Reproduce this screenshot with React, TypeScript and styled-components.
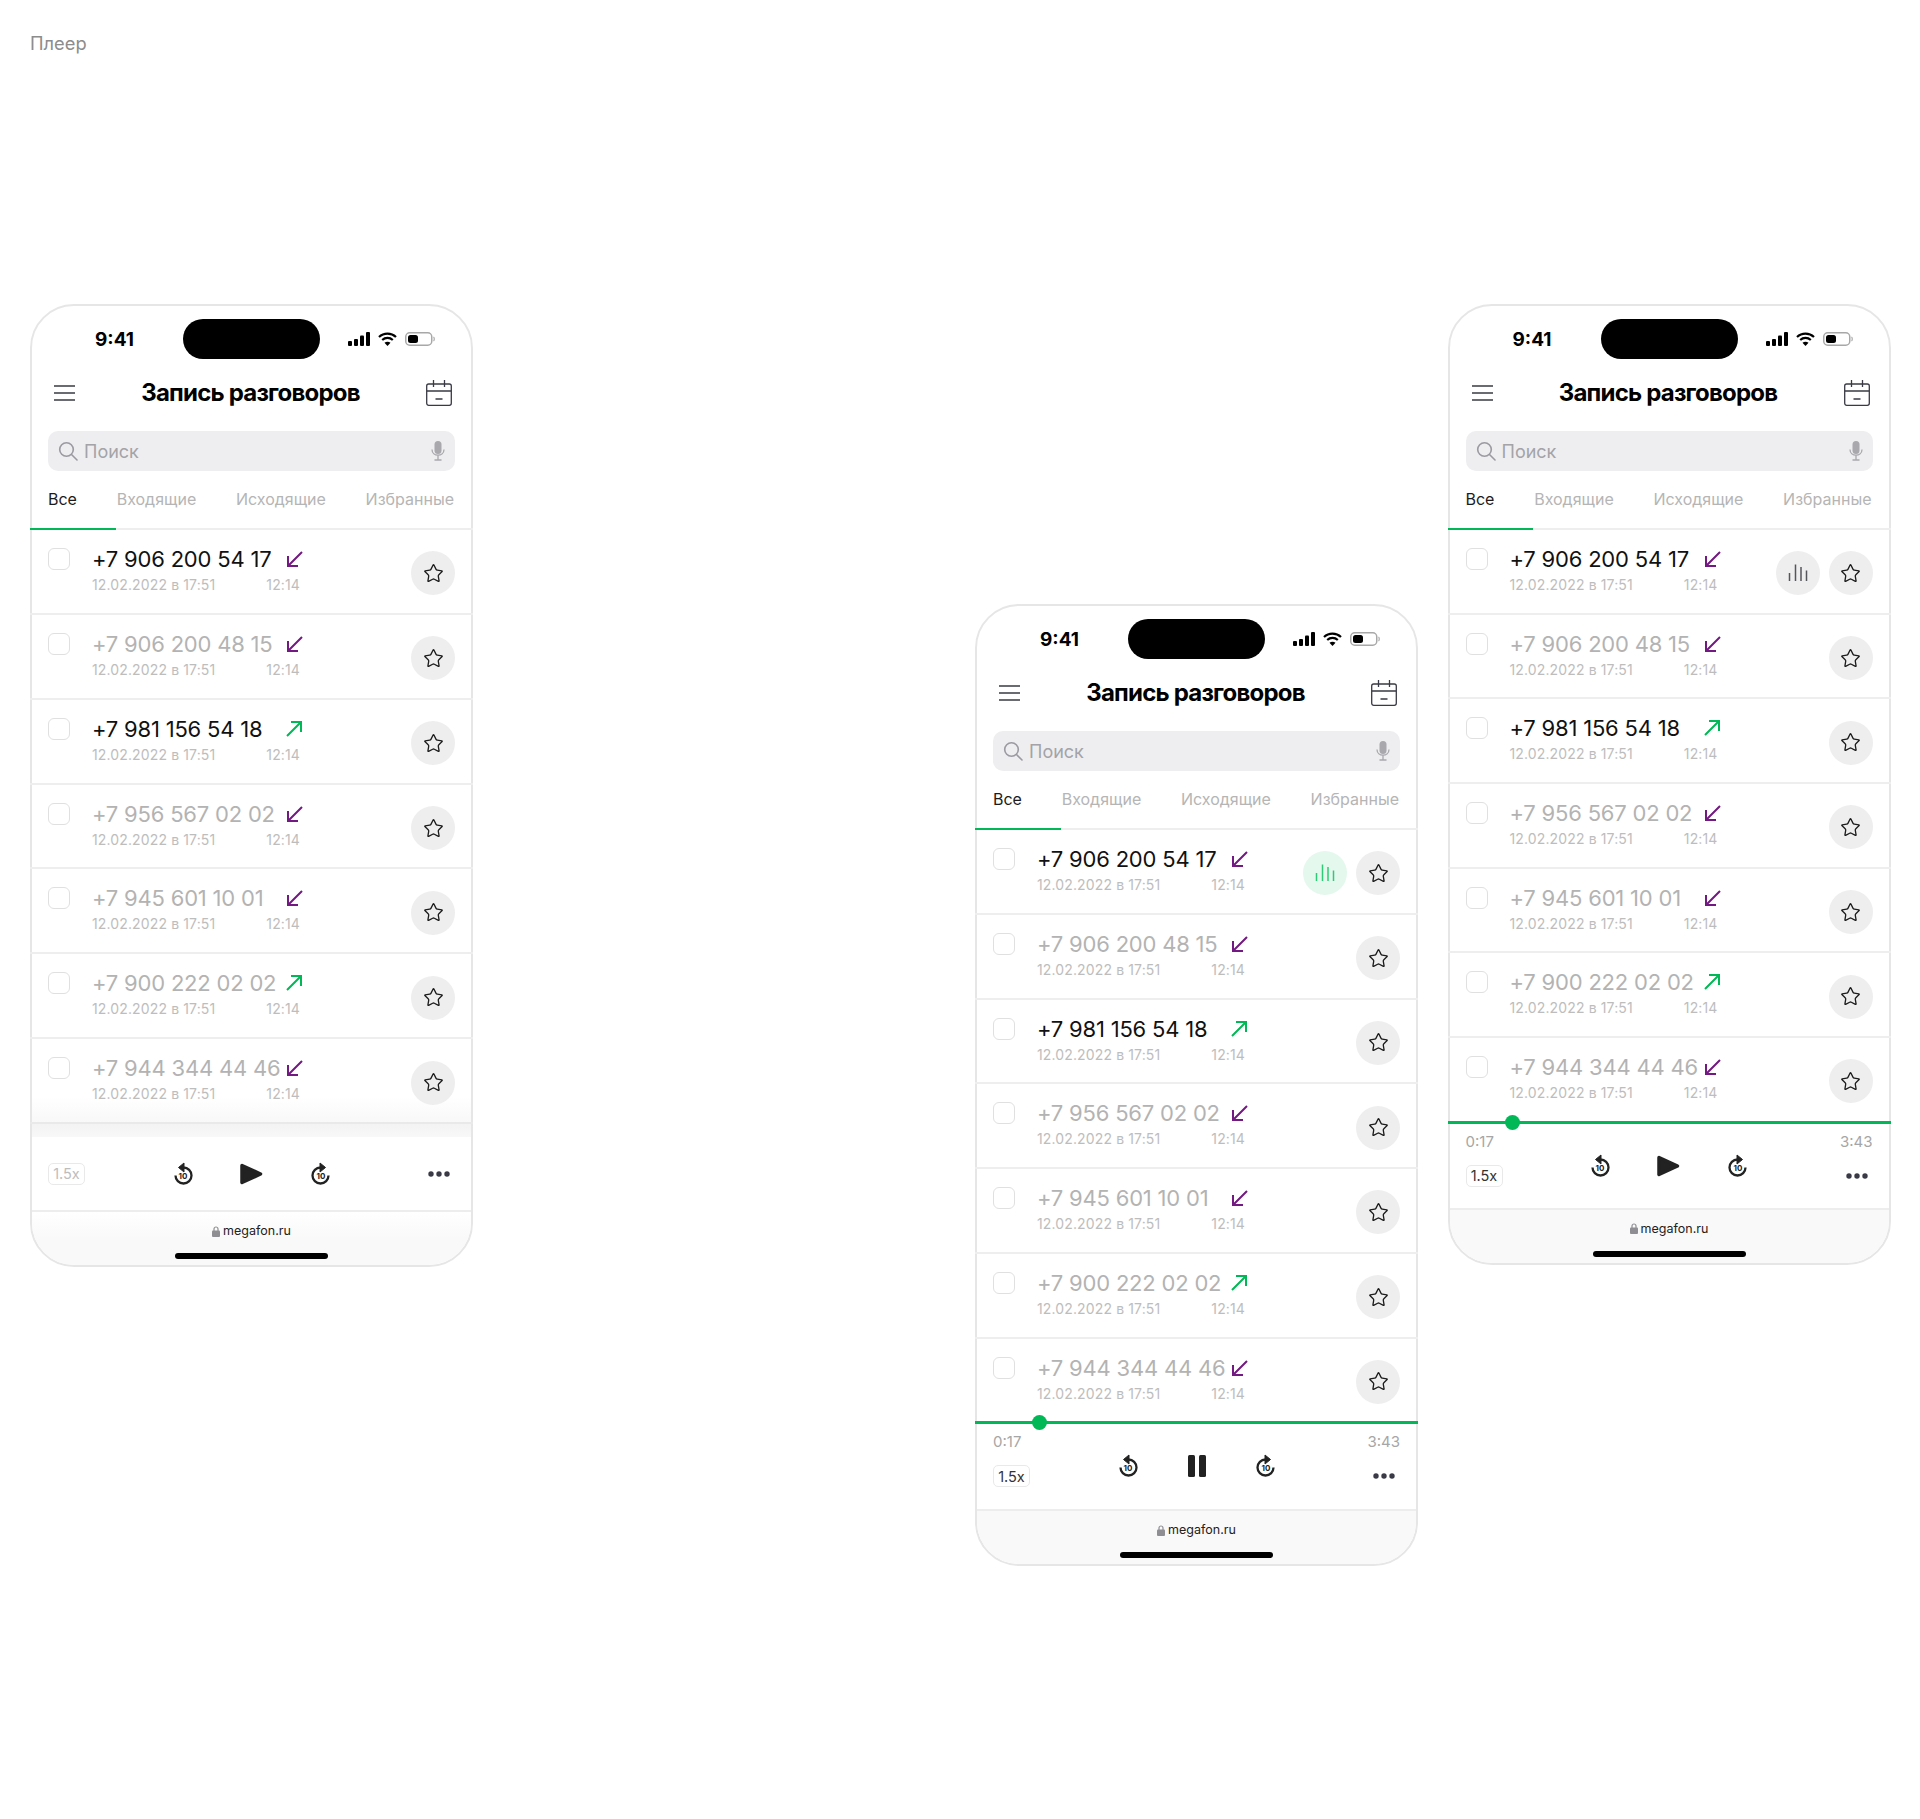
import styled, { createGlobalStyle } from "styled-components";
import { Star } from "lucide-react";

const GlobalStyle = createGlobalStyle`
  html, body {
    margin: 0;
    background: #fff;
    font-family: Inter, "Noto Sans", sans-serif;
  }
  * {
    box-sizing: border-box;
  }
`;

const Page = styled.div`
  width: 1920px;
  height: 1819px;
  padding: 31px 30px 0;
`;

const PageTitle = styled.div`
  height: 24px;
  font-size: 18.3px;
  line-height: 24px;
  color: #8c8c8c;
`;

const Board = styled.div`
  display: flex;
  align-items: flex-start;
  margin-top: 249px;
`;

const PhoneFrame = styled.div<{ $offset: number; $shift: number }>`
  width: 443px;
  flex: none;
  margin-left: ${({ $shift }) => $shift}px;
  margin-top: ${({ $offset }) => $offset}px;
  border: 2px solid #e6e6e6;
  border-radius: 44px;
  background: #fff;
`;

const StatusBar = styled.div`
  height: 61px;
  padding-top: 5px;
  display: grid;
  grid-template-columns: 1fr 137px 1fr;
  align-items: center;
`;

const Clock = styled.div`
  padding-left: 63px;
  font-size: 19px;
  font-weight: 700;
  color: #000;
`;

const Island = styled.div`
  height: 40px;
  border-radius: 20px;
  background: #000;
`;

const StatusIcons = styled.div`
  display: flex;
  align-items: center;
  gap: 8px;
  padding-left: 28px;
`;

const Header = styled.div`
  height: 52px;
  display: grid;
  grid-template-columns: 1fr auto 1fr;
  align-items: center;
  padding: 0 21px 0 19px;
`;

const HeaderStart = styled.div`
  display: flex;
  padding-left: 3px;
`;

const Title = styled.h1`
  margin: 0 0 2px;
  font-size: 24px;
  font-weight: 700;
  letter-spacing: -0.8px;
  color: #000;
`;

const HeaderEnd = styled.div`
  display: flex;
  justify-content: flex-end;
  margin-right: -2px;
`;

const SearchBox = styled.div`
  height: 40px;
  margin: 12px 16px 0;
  padding: 0 10px;
  display: flex;
  align-items: center;
  gap: 6px;
  border-radius: 10px;
  background: #eeeef0;
  font-size: 18px;
  color: #a3a3a8;
`;

const SearchLabel = styled.span`
  flex: 1;
`;

const Tabs = styled.div`
  height: 59px;
  margin: 0 -2px;
  padding: 16px 19px 0 18px;
  display: flex;
  justify-content: space-between;
  border-bottom: 2px solid #eeeeee;
`;

const Tab = styled.div<{ $active?: boolean }>`
  position: relative;
  font-size: 16px;
  line-height: 24px;
  color: ${({ $active }) => ($active ? "#1c1c1c" : "#b5b5b5")};

  ${({ $active }) =>
    $active &&
    `
    &::after {
      content: "";
      position: absolute;
      left: -18px;
      right: -39px;
      bottom: -2px;
      height: 2px;
      background: #00b956;
    }
  `}
`;

const List = styled.div`
  margin: 0 -2px;
`;

const Row = styled.div<{ $fade?: boolean; $height: number }>`
  height: ${({ $height }) => $height}px;
  padding: 0 18px;
  display: flex;
  align-items: flex-start;
  border-bottom: ${({ $fade }) => ($fade ? "2px solid #e9e9e9" : "2px solid #eeeeee")};
  background: ${({ $fade }) =>
    $fade ? "linear-gradient(#fff 70%, #f8f8f8) center / calc(100% - 4px) 100% no-repeat" : "transparent"};
`;

const Checkbox = styled.div`
  width: 22px;
  height: 22px;
  margin-top: 18px;
  flex: none;
  border: 1.5px solid #e0e0e0;
  border-radius: 6px;
  background: #fff;
`;

const Info = styled.div`
  width: 208px;
  margin-left: 22px;
  padding-top: 15px;
`;

const NumberLine = styled.div<{ $seen?: boolean }>`
  height: 28px;
  margin-right: -3px;
  display: flex;
  align-items: center;
  justify-content: space-between;
  font-size: 22px;
  line-height: 28px;
  letter-spacing: -0.2px;
  white-space: nowrap;
  color: ${({ $seen }) => ($seen ? "#b3b3b3" : "#111111")};

  svg {
    flex: none;
  }
`;

const MetaLine = styled.div`
  height: 18px;
  margin-top: 3px;
  display: flex;
  justify-content: space-between;
  font-size: 14px;
  line-height: 18px;
  letter-spacing: 0.13px;
  color: #bdbdbd;
`;

const Actions = styled.div`
  margin-left: auto;
  margin-top: 4px;
  align-self: center;
  display: flex;
  gap: 9px;
`;

const RoundButton = styled.div<{ $tone?: "green" }>`
  width: 44px;
  height: 44px;
  display: flex;
  align-items: center;
  justify-content: center;
  border-radius: 50%;
  color: #1c1c1c;
  background: ${({ $tone }) => ($tone === "green" ? "#e5f8ee" : "#eeeeee")};
`;

const Band = styled.div`
  height: 13px;
  background: linear-gradient(#f3f3f3, #f8f8f8);
`;

const Track = styled.div`
  position: relative;
  height: 3px;
  margin: -2px -2px 0;
  background: #00b956;
`;

const Thumb = styled.div`
  position: absolute;
  left: 57px;
  top: -6px;
  width: 15px;
  height: 15px;
  border-radius: 50%;
  background: #00b956;
`;

const Controls = styled.div<{ $idle?: boolean; $height: number }>`
  height: ${({ $height }) => $height}px;
  padding: ${({ $idle }) => ($idle ? "0 16px" : "9px 16px 0")};
  display: grid;
  grid-template-columns: 1fr auto 1fr;
  align-items: ${({ $idle }) => ($idle ? "center" : "start")};
`;

const SideLeft = styled.div`
  display: flex;
  flex-direction: column;
  align-items: flex-start;
`;

const SideRight = styled.div`
  display: flex;
  flex-direction: column;
  align-items: flex-end;
`;

const Time = styled.div`
  height: 18px;
  margin-bottom: 14px;
  font-size: 15px;
  line-height: 18px;
  color: #a6a6a6;
`;

const SpeedBadge = styled.div<{ $idle?: boolean }>`
  width: 37px;
  height: 22px;
  display: flex;
  align-items: center;
  justify-content: center;
  border: 1.5px solid #e9e9e9;
  border-radius: 5px;
  font-size: 14.5px;
  color: ${({ $idle }) => ($idle ? "#bdbdbd" : "#333333")};
`;

const Transport = styled.div<{ $idle?: boolean }>`
  display: flex;
  align-items: center;
  gap: 45px;
  margin-top: ${({ $idle }) => ($idle ? 0 : 21)}px;
`;

const Dots = styled.svg<{ $idle?: boolean }>`
  display: block;
  margin-top: ${({ $idle }) => ($idle ? 0 : 8)}px;
  margin-right: 5px;
`;

const Footer = styled.div<{ $fade?: boolean }>`
  height: 55px;
  padding-top: 10px;
  display: flex;
  flex-direction: column;
  align-items: center;
  border-top: 2px solid #ededed;
  border-radius: 0 0 42px 42px;
  background: ${({ $fade }) => ($fade ? "linear-gradient(#fff, #f9f9f9 50%)" : "#f9f9f9")};
`;

const Url = styled.div`
  height: 18px;
  display: flex;
  align-items: center;
  gap: 3px;
  font-size: 12.5px;
  line-height: 18px;
  color: #222222;
`;

const HomeBar = styled.div`
  width: 153px;
  height: 6px;
  margin-top: 13px;
  border-radius: 3px;
  background: #000;
`;

const ICON_DARK = "#3a3a46";

const SignalIcon = () => (
  <svg width="22" height="14" viewBox="0 0 22 14">
    <rect x="0" y="9" width="4" height="5" rx="1" fill="#000" />
    <rect x="6" y="7" width="4" height="7" rx="1" fill="#000" />
    <rect x="12" y="3.5" width="4" height="10.5" rx="1" fill="#000" />
    <rect x="18" y="0" width="4" height="14" rx="1" fill="#000" />
  </svg>
);

const WifiIcon = () => (
  <svg width="19" height="14" viewBox="0 0 19 14">
    <path d="M1 5c4.8-4.6 12.2-4.6 17 0" fill="none" stroke="#000" strokeWidth="2.2" />
    <path d="M4.2 8c3-2.8 7.6-2.8 10.6 0" fill="none" stroke="#000" strokeWidth="2.2" />
    <path d="M9.5 14l-3-3.2c1.7-1.4 4.3-1.4 6 0z" fill="#000" />
  </svg>
);

const BatteryIcon = () => (
  <svg width="30" height="14" viewBox="0 0 30 14">
    <rect x="0.75" y="0.75" width="26" height="12.5" rx="4" fill="none" stroke="#a8a8a8" strokeWidth="1.5" />
    <rect x="3" y="3" width="10" height="8" rx="2.5" fill="#000" />
    <path d="M28.5 5c1 .6 1 3.4 0 4" fill="none" stroke="#a8a8a8" strokeWidth="1.2" />
  </svg>
);

const MenuIcon = () => (
  <svg width="21" height="16" viewBox="0 0 21 16">
    <path d="M0 1h21M0 8h21M0 15h21" stroke={ICON_DARK} strokeWidth="1.3" />
  </svg>
);

const CalendarIcon = () => (
  <svg width="26" height="26" viewBox="0 0 26 26" fill="none" stroke={ICON_DARK} strokeWidth="1.3">
    <rect x="0.7" y="4" width="24.6" height="21.3" rx="2" />
    <path d="M1 11h24M7.5 0v7M18.5 0v7M9.5 19h7" />
  </svg>
);

const SearchIcon = () => (
  <svg width="20" height="20" viewBox="0 0 20 20" fill="none" stroke="#9a9aa0" strokeWidth="1.6">
    <circle cx="8.5" cy="8.5" r="6.8" />
    <path d="M13.5 13.5l5.5 5.5" strokeLinecap="round" />
  </svg>
);

const MicIcon = () => (
  <svg width="14" height="20" viewBox="0 0 14 20">
    <rect x="3.5" y="0" width="7" height="13" rx="3.5" fill="#a8a8ad" />
    <path d="M1 8.5c0 7.5 12 7.5 12 0M7 14.5V19M3.5 19h7" fill="none" stroke="#a8a8ad" strokeWidth="1.3" />
  </svg>
);

const CallArrow = ({ out }: { out?: boolean }) =>
  out ? (
    <svg width="17" height="16" viewBox="0 0 17 16" fill="none" stroke="#00b956" strokeWidth="2">
      <path d="M1 15L15 1M5 1h10v10" />
    </svg>
  ) : (
    <svg width="17" height="16" viewBox="0 0 17 16" fill="none" stroke="#731982" strokeWidth="2">
      <path d="M16 1L2 15M2 5v10h10" />
    </svg>
  );

const WaveIcon = ({ color }: { color: string }) => (
  <svg width="44" height="44" viewBox="0 0 44 44" stroke={color} strokeWidth="1.5">
    <path d="M13.5 22v8M19.5 13.5V30M25 16v14M30.5 19.5V30" />
  </svg>
);

const SkipIcon = ({ forward }: { forward?: boolean }) => (
  <svg width="24" height="24" viewBox="0 0 24 24">
    <g transform={forward ? "matrix(-1 0 0 1 24 0)" : undefined}>
      <path d="M12.5 5.5a8 8 0 1 1-8 8" fill="none" stroke="#222" strokeWidth="2.3" />
      <path d="M13 1L7.5 5.5 13 10z" fill="#222" stroke="#222" strokeLinejoin="round" />
    </g>
    <text x="12" y="17" textAnchor="middle" fontSize="8" fontWeight="700" fontFamily="Inter, sans-serif" fill="#222">
      10
    </text>
  </svg>
);

const PlayIcon = () => (
  <svg width="24" height="24" viewBox="0 0 24 24">
    <path d="M2 3.5L20.5 12 2 20.5z" fill="#222" stroke="#222" strokeWidth="3.5" strokeLinejoin="round" />
  </svg>
);

const PauseIcon = () => (
  <svg width="24" height="24" viewBox="0 0 24 24" fill="#222">
    <rect x="3" y="1" width="7" height="22" rx="1.5" />
    <rect x="14" y="1" width="7" height="22" rx="1.5" />
  </svg>
);

const DotsIcon = ({ idle }: { idle?: boolean }) => (
  <Dots $idle={idle} width="22" height="6" viewBox="0 0 22 6" fill={ICON_DARK}>
    <circle cx="3" cy="3" r="2.7" />
    <circle cx="11" cy="3" r="2.7" />
    <circle cx="19" cy="3" r="2.7" />
  </Dots>
);

const LockIcon = () => (
  <svg width="8" height="11" viewBox="0 0 8 11">
    <path d="M2 5V3a2 2 0 0 1 4 0v2" fill="none" stroke="#8e8e93" strokeWidth="1.2" />
    <rect x="0" y="4.5" width="8" height="6.5" rx="1" fill="#8e8e93" />
  </svg>
);

type Call = { number: string; out?: boolean; seen?: boolean };

const calls: Call[] = [
  { number: "+7 906 200 54 17" },
  { number: "+7 906 200 48 15", seen: true },
  { number: "+7 981 156 54 18", out: true },
  { number: "+7 956 567 02 02", seen: true },
  { number: "+7 945 601 10 01", seen: true },
  { number: "+7 900 222 02 02", out: true, seen: true },
  { number: "+7 944 344 44 46", seen: true },
];

const tabs = ["Все", "Входящие", "Исходящие", "Избранные"];

type PhoneProps = {
  offset?: number;
  shift?: number;
  state: "idle" | "playing" | "paused";
  wave?: "green" | "gray";
  rowHeight?: number;
  controlsHeight: number;
};

const Phone = ({ offset = 0, shift = 0, state, wave, rowHeight = 84.86, controlsHeight }: PhoneProps) => {
  const idle = state === "idle";

  return (
    <PhoneFrame $offset={offset} $shift={shift}>
      <StatusBar>
        <Clock>9:41</Clock>
        <Island />
        <StatusIcons>
          <SignalIcon />
          <WifiIcon />
          <BatteryIcon />
        </StatusIcons>
      </StatusBar>
      <Header>
        <HeaderStart>
          <MenuIcon />
        </HeaderStart>
        <Title>Запись разговоров</Title>
        <HeaderEnd>
          <CalendarIcon />
        </HeaderEnd>
      </Header>
      <SearchBox>
        <SearchIcon />
        <SearchLabel>Поиск</SearchLabel>
        <MicIcon />
      </SearchBox>
      <Tabs>
        {tabs.map((tab, i) => (
          <Tab key={tab} $active={i === 0}>
            {tab}
          </Tab>
        ))}
      </Tabs>
      <List>
        {calls.map((call, i) => (
          <Row key={call.number} $height={rowHeight} $fade={idle && i === calls.length - 1}>
            <Checkbox />
            <Info>
              <NumberLine $seen={call.seen}>
                {call.number}
                <CallArrow out={call.out} />
              </NumberLine>
              <MetaLine>
                <span>12.02.2022 в 17:51</span>
                <span>12:14</span>
              </MetaLine>
            </Info>
            <Actions>
              {i === 0 && wave && (
                <RoundButton $tone={wave === "green" ? "green" : undefined}>
                  <WaveIcon color={wave === "green" ? "#2ecb77" : "#55555c"} />
                </RoundButton>
              )}
              <RoundButton>
                <Star size={21} strokeWidth={1.5} />
              </RoundButton>
            </Actions>
          </Row>
        ))}
      </List>
      {idle ? (
        <Band />
      ) : (
        <Track>
          <Thumb />
        </Track>
      )}
      <Controls $idle={idle} $height={controlsHeight}>
        <SideLeft>
          {!idle && <Time>0:17</Time>}
          <SpeedBadge $idle={idle}>1.5x</SpeedBadge>
        </SideLeft>
        <Transport $idle={idle}>
          <SkipIcon />
          {state === "playing" ? <PauseIcon /> : <PlayIcon />}
          <SkipIcon forward />
        </Transport>
        <SideRight>
          {!idle && <Time>3:43</Time>}
          <DotsIcon idle={idle} />
        </SideRight>
      </Controls>
      <Footer $fade={idle}>
        <Url>
          <LockIcon />
          megafon.ru
        </Url>
        <HomeBar />
      </Footer>
    </PhoneFrame>
  );
};

const App = () => (
  <Page>
    <GlobalStyle />
    <PageTitle>Плеер</PageTitle>
    <Board>
      <Phone state="idle" controlsHeight={73} />
      <Phone state="playing" wave="green" offset={300} shift={502} controlsHeight={85} rowHeight={84.75} />
      <Phone state="paused" wave="gray" shift={29.5} controlsHeight={84} rowHeight={84.7} />
    </Board>
  </Page>
);

export default App;
